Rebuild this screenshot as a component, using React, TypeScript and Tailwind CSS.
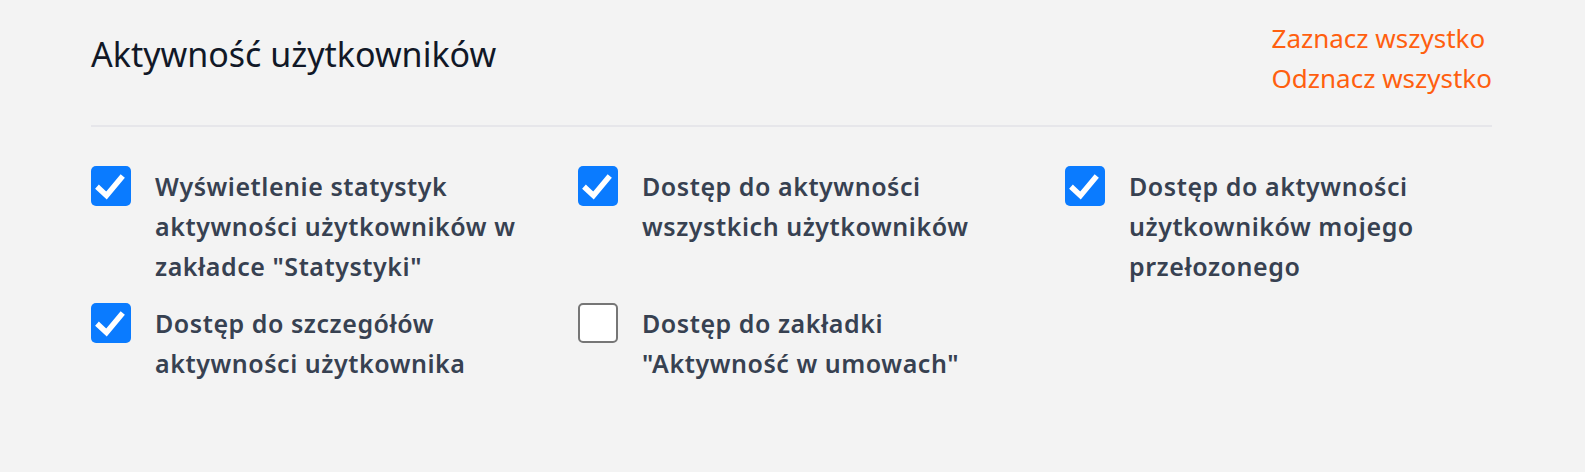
import React from 'react';

type Perm = { lines: string[]; checked: boolean };

const perms: Perm[] = [
  { lines: ['Wyświetlenie statystyk', 'aktywności użytkowników w', 'zakładce "Statystyki"'], checked: true },
  { lines: ['Dostęp do aktywności', 'wszystkich użytkowników'], checked: true },
  { lines: ['Dostęp do aktywności', 'użytkowników mojego', 'przełozonego'], checked: true },
  { lines: ['Dostęp do szczegółów', 'aktywności użytkownika'], checked: true },
  { lines: ['Dostęp do zakładki', '"Aktywność w umowach"'], checked: false },
];

function Box({ checked }: { checked: boolean }) {
  if (!checked) {
    return <span className="block w-[40px] h-[40px] shrink-0 rounded-[5px] border-2 border-[#767676] bg-white" />;
  }
  return (
    <span className="flex w-[40px] h-[40px] shrink-0 items-center justify-center rounded-[5px] bg-[#0a7bff]">
      <svg viewBox="0 0 40 40" className="w-[40px] h-[40px]">
        <path d="M8 22.5 L15.5 29.5 L30 12" fill="none" stroke="white" strokeWidth="5.5" strokeLinecap="square" strokeLinejoin="miter" />
      </svg>
    </span>
  );
}

export default function App() {
  return (
    <div className="min-h-[472px] w-full bg-[#f3f3f3] pl-[91px] pr-[93px] pt-[18px] font-['Noto_Sans',sans-serif]">
      <div className="flex items-start justify-between border-b-2 border-[#e6e6ea] pb-[27px]">
        <h2 className="mt-[12px] text-[34px] leading-[48px] font-normal text-[#111827]">Aktywność użytkowników</h2>
        <div className="flex flex-col text-[26px] leading-[40px] text-[#ff5f0f]">
          <a href="#" className="hover:underline">Zaznacz wszystko</a>
          <a href="#" className="hover:underline">Odznacz wszystko</a>
        </div>
      </div>

      <div className="mt-[39px] grid grid-cols-3 gap-x-[60px] gap-y-[17px]">
        {perms.map((p, i) => (
          <label key={i} className="flex items-start gap-[24px]">
            <Box checked={p.checked} />
            <span className="text-[25px] leading-[40px] tracking-[0.55px] font-[560] text-[#374151]">
              {p.lines.map((l, j) => (
                <span key={j} className="block whitespace-nowrap">{l}</span>
              ))}
            </span>
          </label>
        ))}
      </div>
    </div>
  );
}
